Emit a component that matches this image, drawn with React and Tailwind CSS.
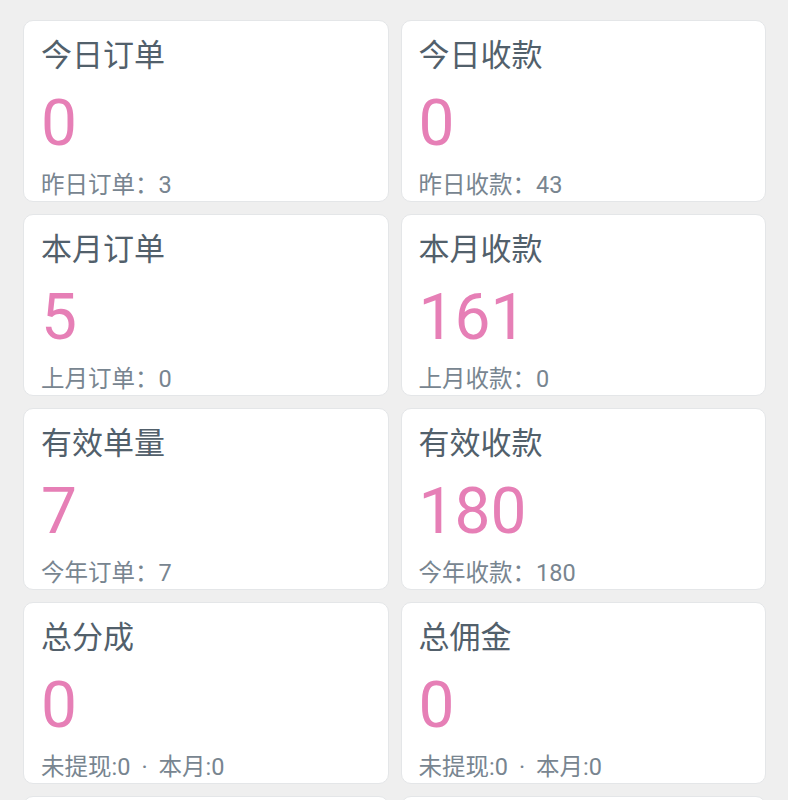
import React from "react";

const cards = [
  ["今日订单", "0", "昨日订单：3"],
  ["今日收款", "0", "昨日收款：43"],
  ["本月订单", "5", "上月订单：0"],
  ["本月收款", "161", "上月收款：0"],
  ["有效单量", "7", "今年订单：7"],
  ["有效收款", "180", "今年收款：180"],
  ["总分成", "0", null],
  ["总佣金", "0", null],
  ["", "", ""],
  ["", "", ""],
];

function Card({ title, value, sub }) {
  return (
    <div className="h-[182px] rounded-[10px] border border-[#e4e6e8] bg-white pl-[17px] pt-[15px] overflow-hidden">
      <div className="text-[31px] leading-[40px] text-[#52606b]">{title}</div>
      <div className="mt-[16px] text-[64px] leading-[64px] text-[#e67fb6]">{value}</div>
      <div className="mt-[15px] text-[23.5px] leading-[28px] text-[#788590] whitespace-nowrap">
        {sub === null ? (
          <>
            <span>未提现:0</span>
            <span className="mx-[11px]">·</span>
            <span>本月:0</span>
          </>
        ) : (
          sub
        )}
      </div>
    </div>
  );
}

export default function App() {
  return (
    <div
      className="h-[800px] overflow-hidden bg-[#efefef] pl-[23px] pr-[22px] pt-[20px]"
      style={{ fontFamily: "Roboto, 'Noto Sans CJK SC', sans-serif" }}
    >
      <div className="grid grid-cols-2 gap-x-[12px] gap-y-[12px]">
        {cards.map(([t, v, s], i) => (
          <Card key={i} title={t} value={v} sub={s} />
        ))}
      </div>
    </div>
  );
}
